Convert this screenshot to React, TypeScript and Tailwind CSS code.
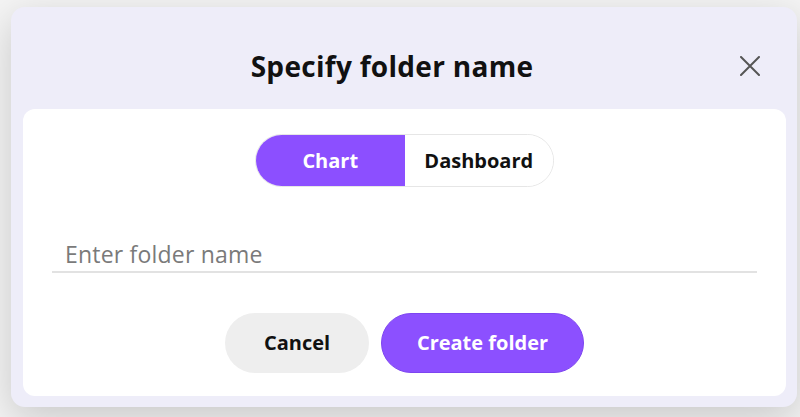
// Folder name dialog · chart / dashboard toggle + name input.

import { useState } from "react";

type Kind = "chart" | "dashboard";

export default function App() {
  const [kind, setKind] = useState<Kind>("chart");
  const [name, setName] = useState("");

  return (
    <div
      className="h-[417px] w-[800px] overflow-hidden bg-[#f4f4f4] pt-[7px] pl-[11px]"
      style={{ fontFamily: "'Open Sans', 'Noto Sans', sans-serif" }}
    >
      <div className="flex h-[400px] w-[786px] flex-col rounded-[14px] bg-[#eeedf9] pr-[11px] pb-[11px] pl-[12px] shadow-[0_12px_40px_rgba(0,0,0,0.18)]">
        <div className="relative flex h-[102px] items-start justify-center pt-[40px] pr-[25px]">
          <h1 className="text-[28px] leading-[38px] font-bold tracking-[0.3px] text-[#111]">
            Specify folder name
          </h1>
          <button
            type="button"
            aria-label="Close"
            className="absolute top-[49px] right-[26px] flex h-[20px] w-[20px] items-center justify-center text-[#555]"
          >
            <svg width="20" height="20" viewBox="0 0 20 20" fill="none">
              <path
                d="M1 1L19 19M19 1L1 19"
                stroke="currentColor"
                strokeWidth="2"
                strokeLinecap="round"
              />
            </svg>
          </button>
        </div>

        <div className="flex flex-1 flex-col rounded-[12px] bg-white px-[29px] pt-[25px]">
          <div className="flex justify-center">
            <div className="flex h-[53px] w-[299px] overflow-hidden rounded-full border border-[#e6e6e6]">
              <button
                type="button"
                onClick={() => setKind("chart")}
                className={`flex-1 text-[20px] font-bold ${
                  kind === "chart"
                    ? "bg-[#8c4fff] text-white"
                    : "bg-white text-[#111]"
                }`}
              >
                Chart
              </button>
              <button
                type="button"
                onClick={() => setKind("dashboard")}
                className={`flex-1 text-[20px] font-bold ${
                  kind === "dashboard"
                    ? "bg-[#8c4fff] text-white"
                    : "bg-white text-[#111]"
                }`}
              >
                Dashboard
              </button>
            </div>
          </div>

          <input
            value={name}
            onChange={(e) => setName(e.target.value)}
            placeholder="Enter folder name"
            className="mt-[38px] h-[48px] w-full border-b-2 border-[#e2e2e2] px-[13px] pt-[12px] text-[23px] tracking-[0.2px] text-[#222] outline-none placeholder:text-[#7a7a7a]"
          />

          <div className="mt-[40px] flex justify-center gap-[12px]">
            <button
              type="button"
              className="h-[60px] w-[144px] rounded-full bg-[#eeeeee] text-[20px] font-bold text-[#111]"
            >
              Cancel
            </button>
            <button
              type="button"
              className="h-[60px] w-[203px] rounded-full border border-[#7d45f0] bg-[#8c50ff] text-[20px] font-bold text-white"
            >
              Create folder
            </button>
          </div>
        </div>
      </div>
    </div>
  );
}
